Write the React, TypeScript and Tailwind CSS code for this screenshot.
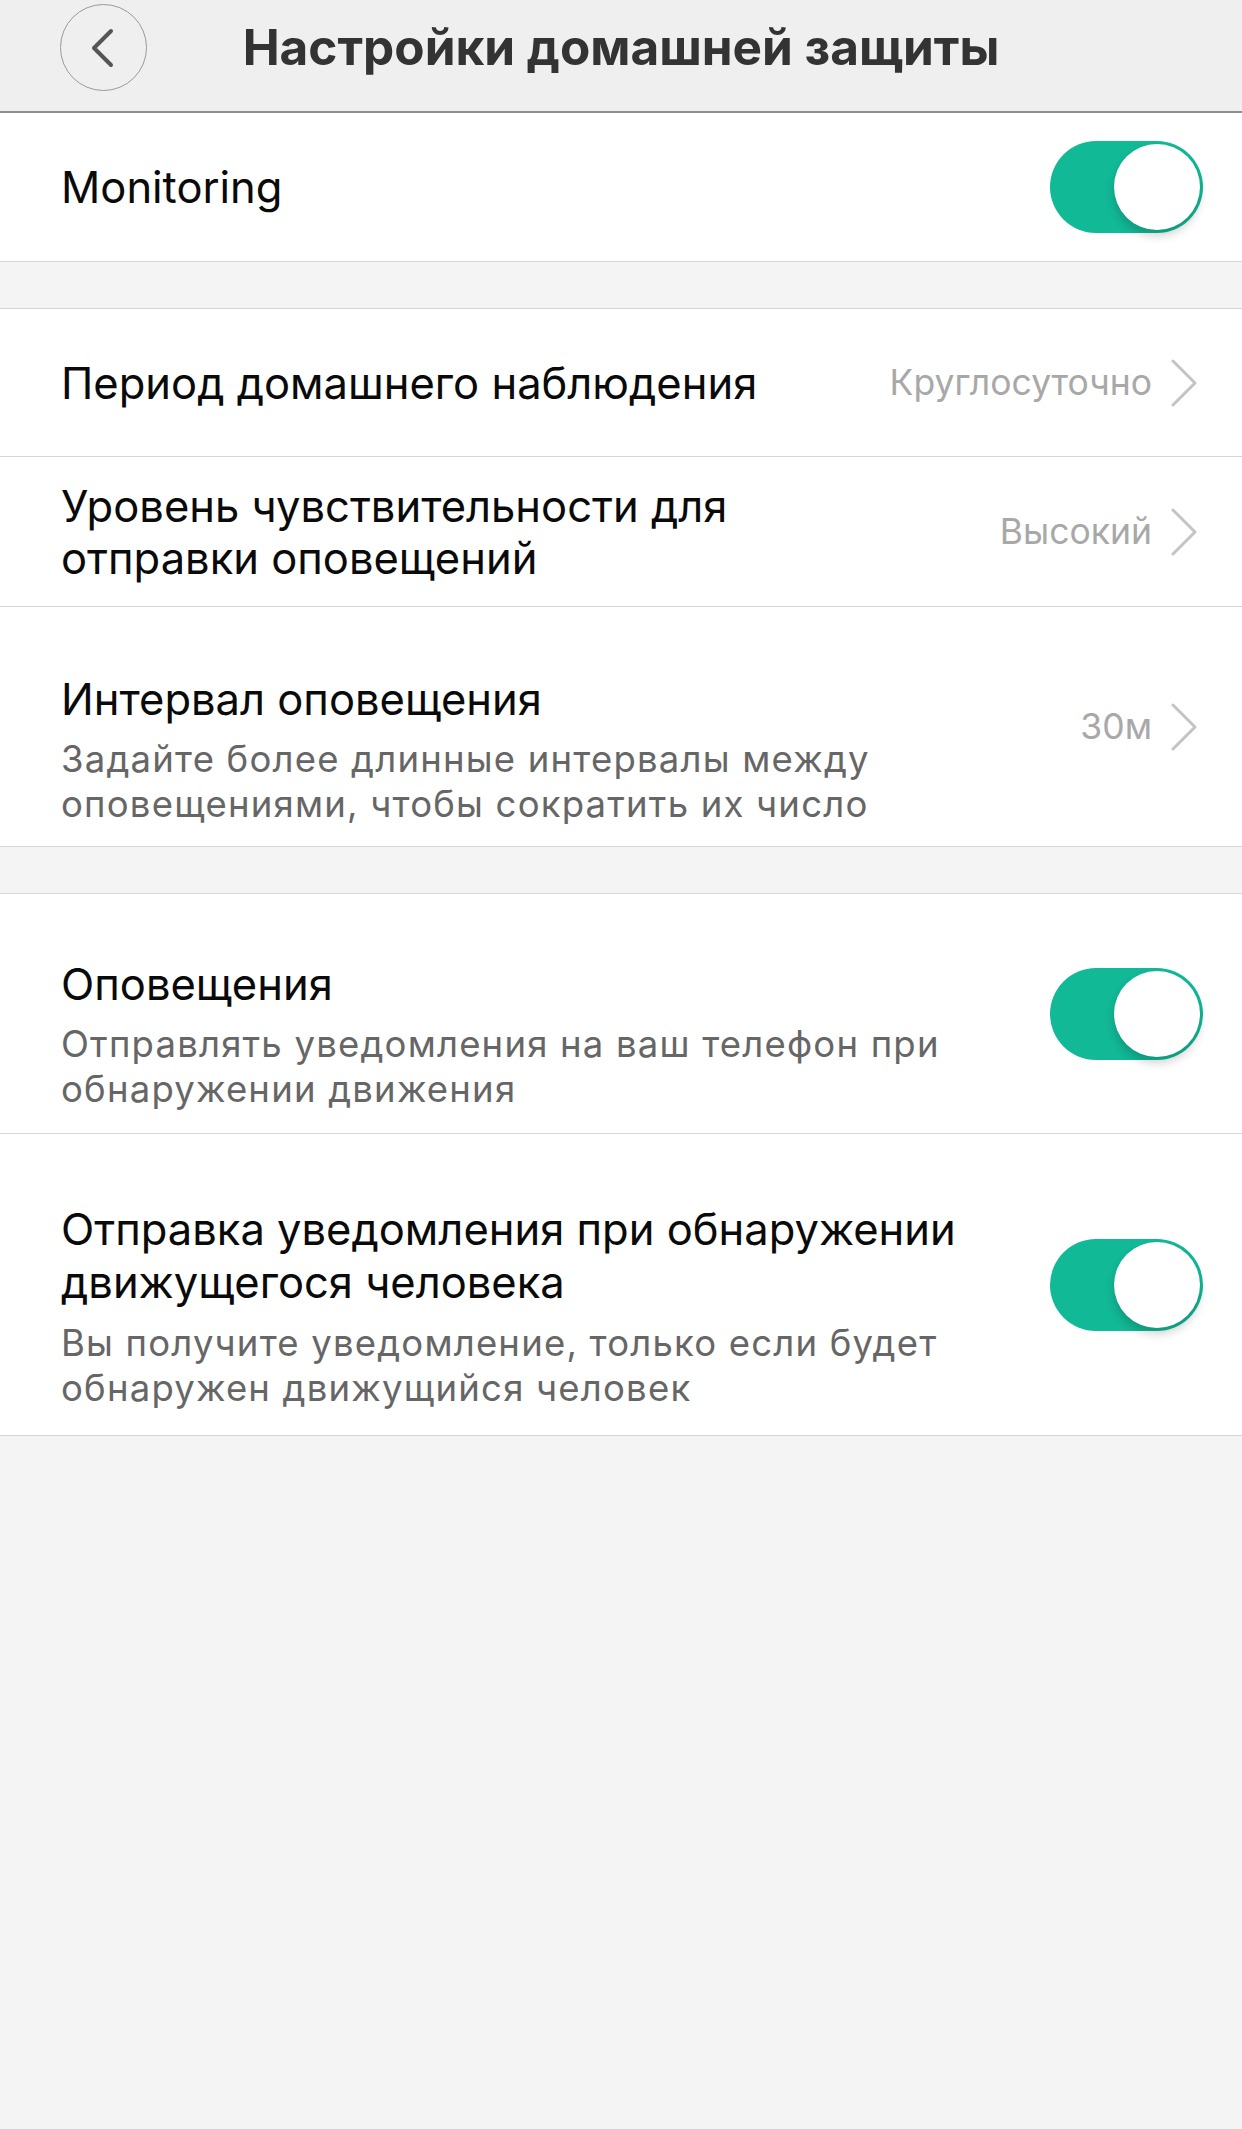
import { ReactNode } from "react";

const font = { fontFamily: "Inter, 'Noto Sans', sans-serif" };

function Toggle() {
  return (
    <div className="flex h-[92px] w-[153px] shrink-0 items-center justify-end rounded-full bg-[#11b996] p-[3px]">
      <div className="h-[86px] w-[86px] rounded-full bg-white shadow-[0_6px_10px_rgba(0,0,0,0.18)]" />
    </div>
  );
}

function Chevron() {
  return (
    <svg width="29" height="48" viewBox="0 0 29 48" className="shrink-0">
      <path d="M3 2 L25 24 L3 46" fill="none" stroke="#c4c4c4" strokeWidth="3" strokeLinecap="round" strokeLinejoin="round" />
    </svg>
  );
}

function Value({ text }: { text: string }) {
  return (
    <div className="flex shrink-0 items-center gap-[18px] pr-[4px]">
      <span className="text-[35.5px] leading-[45px] text-[#a8a8a8]">{text}</span>
      <Chevron />
    </div>
  );
}

function Row({ className, children }: { className: string; children: ReactNode }) {
  return (
    <div className={`flex items-center justify-between border-b border-[#d6d6d6] bg-white pl-[61px] pr-[39px] ${className}`}>
      {children}
    </div>
  );
}

function Label({ children }: { children: ReactNode }) {
  return <div className="text-[43.5px] leading-[52px] text-[#0a0a0a]">{children}</div>;
}

function Hint({ children }: { children: ReactNode }) {
  return <div className="mt-[12px] text-[36.5px] leading-[45px] tracking-[1.2px] text-[#666666]">{children}</div>;
}

export default function App() {
  return (
    <div className="min-h-[2129px] w-full bg-[#f4f4f4]" style={font}>
      <header className="grid h-[113px] grid-cols-[1fr_auto_1fr] items-start border-b-2 border-[#8e8e8e] bg-[#efefef] pt-[4px]">
        <div className="pl-[60px]">
          <div className="flex h-[87px] w-[87px] items-center justify-center rounded-full border border-[#9a9a9a]">
            <svg width="26" height="40" viewBox="0 0 26 40" className="-ml-[4px]">
              <path d="M22 3 L5 20 L22 37" fill="none" stroke="#555555" strokeWidth="4" strokeLinecap="round" strokeLinejoin="round" />
            </svg>
          </div>
        </div>
        <h1 className="text-[49.5px] font-bold leading-[87px] text-[#333333]">Настройки домашней защиты</h1>
        <div />
      </header>

      <Row className="h-[149px]">
        <Label>Monitoring</Label>
        <Toggle />
      </Row>

      <div className="h-[46px]" />

      <div className="border-t border-[#d6d6d6]">
        <Row className="h-[148px]">
          <Label>Период домашнего наблюдения</Label>
          <Value text="Круглосуточно" />
        </Row>
        <Row className="h-[150px]">
          <Label>
            Уровень чувствительности для
            <br />
            отправки оповещений
          </Label>
          <Value text="Высокий" />
        </Row>
        <Row className="min-h-[240px]">
          <div className="pt-[66px] pb-[19px]">
            <Label>Интервал оповещения</Label>
            <Hint>
              Задайте более длинные интервалы между
              <br />
              оповещениями, чтобы сократить их число
            </Hint>
          </div>
          <Value text="30м" />
        </Row>
      </div>

      <div className="h-[46px]" />

      <div className="border-t border-[#d6d6d6]">
        <Row className="min-h-[239px]">
          <div className="pt-[64px] pb-[21px]">
            <Label>Оповещения</Label>
            <Hint>
              Отправлять уведомления на ваш телефон при
              <br />
              обнаружении движения
            </Hint>
          </div>
          <Toggle />
        </Row>
        <Row className="min-h-[300px]">
          <div className="pt-[69px] pb-[24px]">
            <div className="text-[43.5px] leading-[53px] text-[#0a0a0a]">
              Отправка уведомления при обнаружении
              <br />
              движущегося человека
            </div>
            <Hint>
              Вы получите уведомление, только если будет
              <br />
              обнаружен движущийся человек
            </Hint>
          </div>
          <Toggle />
        </Row>
      </div>
    </div>
  );
}
